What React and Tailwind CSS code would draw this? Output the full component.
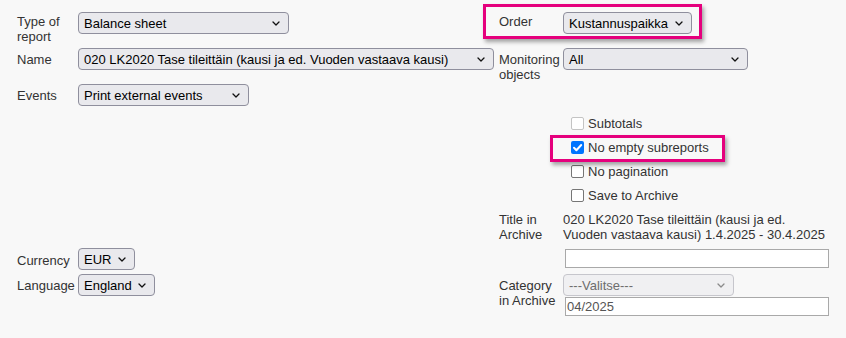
import React from "react";

function Chevron({ disabled }) {
  return (
    <svg width="8" height="5" viewBox="0 0 8 5" className="shrink-0">
      <path
        d="M1 1 L4 4 L7 1"
        fill="none"
        stroke={disabled ? "#8a8a8a" : "#111"}
        strokeWidth="1.3"
        strokeLinecap="round"
        strokeLinejoin="round"
      />
    </svg>
  );
}

function Select({ value, className, disabled }) {
  return (
    <div
      className={
        "flex items-center justify-between h-[22px] rounded-[4px] border pl-[5px] pr-[8px] whitespace-nowrap " +
        (disabled
          ? "border-[#c6c6cc] bg-[#f0f0f2] text-[#6d6d6d] "
          : "border-[#8f8f9d] bg-[#e9e9ed] text-black ") +
        className
      }
    >
      <span>{value}</span>
      <Chevron disabled={disabled} />
    </div>
  );
}

function Check({ label, checked, disabled }) {
  return (
    <div className="flex items-start pt-[4px]">
      {checked ? (
        <div className="ml-[8px] mt-[1px] w-[13px] h-[13px] rounded-[2px] bg-[#0075ff] flex items-center justify-center">
          <svg width="13" height="13" viewBox="0 0 13 13">
            <path d="M3 6.8 L5.4 9.2 L10.2 4" fill="none" stroke="#fff" strokeWidth="2" strokeLinecap="round" strokeLinejoin="round" />
          </svg>
        </div>
      ) : (
        <div
          className={
            "ml-[8px] mt-[1px] w-[13px] h-[13px] rounded-[2px] bg-white border " +
            (disabled ? "border-[#c4c4c4]" : "border-[#767676]")
          }
        />
      )}
      <span className="ml-[4px]">{label}</span>
    </div>
  );
}

export default function App() {
  return (
    <div className="relative min-h-screen bg-[#f8f8f8] font-['Liberation_Sans',Arial,sans-serif] text-[13px] leading-[15px] text-[#333]">
      <div className="pt-[12px] pl-[17px]">
        <div className="grid grid-cols-[61px_421px_64px_266px] grid-rows-[36px_36px_28px_24px_24px_24px_24px_40px_26px_auto]">
          {/* Row 1 */}
          <div className="pt-[2px]">Type of report</div>
          <div>
            <Select value="Balance sheet" className="w-[211px]" />
          </div>
          <div className="pt-[2px]">Order</div>
          <div>
            <Select value="Kustannuspaikka" className="w-[129px]" />
          </div>

          {/* Row 2 */}
          <div className="pt-[4px]">Name</div>
          <div>
            <Select
              value="020 LK2020 Tase tileittäin (kausi ja ed. Vuoden vastaava kausi)"
              className="w-[416px]"
            />
          </div>
          <div className="pt-[4px]">Monitoring objects</div>
          <div>
            <Select value="All" className="w-[185px]" />
          </div>

          {/* Row 3 */}
          <div className="pt-[4px]">Events</div>
          <div>
            <Select value="Print external events" className="w-[171px]" />
          </div>
          <div />
          <div />

          {/* Checkbox rows */}
          <div />
          <div />
          <div />
          <Check label="Subtotals" disabled />

          <div />
          <div />
          <div />
          <Check label="No empty subreports" checked />

          <div />
          <div />
          <div />
          <Check label="No pagination" />

          <div />
          <div />
          <div />
          <Check label="Save to Archive" />

          {/* Title in archive */}
          <div />
          <div />
          <div className="pt-[4px]">Title in Archive</div>
          <div className="pt-[4px] whitespace-nowrap">
            020 LK2020 Tase tileittäin (kausi ja ed.
            <br />
            Vuoden vastaava kausi) 1.4.2025 - 30.4.2025
          </div>

          {/* Currency */}
          <div className="pt-[5px]">Currency</div>
          <div>
            <Select value="EUR" className="w-[57px]" />
          </div>
          <div />
          <div>
            <div className="mt-[1px] ml-[2px] w-[264px] h-[19px] bg-white border border-[#a9a9a9]" />
          </div>

          {/* Language / Category */}
          <div className="pt-[4px]">Language</div>
          <div>
            <Select value="England" className="w-[77px]" />
          </div>
          <div className="pt-[4px]">Category in Archive</div>
          <div className="flex flex-col">
            <Select value="---Valitse---" className="w-[171px]" disabled />
            <div className="mt-[1px] ml-[2px] w-[264px] h-[19px] bg-white border border-[#a9a9a9] pl-[1px] text-[#555] leading-[17px]">
              04/2025
            </div>
          </div>
        </div>
      </div>

      {/* Highlight annotations */}
      <div className="absolute left-[483px] top-[4px] w-[219px] h-[35px] border-[3px] border-[#e5007d] shadow-[2px_3px_4px_rgba(0,0,0,0.35)] pointer-events-none" />
      <div className="absolute left-[550px] top-[135px] w-[175px] h-[27px] border-[3px] border-[#e5007d] shadow-[2px_3px_4px_rgba(0,0,0,0.35)] pointer-events-none" />
    </div>
  );
}
